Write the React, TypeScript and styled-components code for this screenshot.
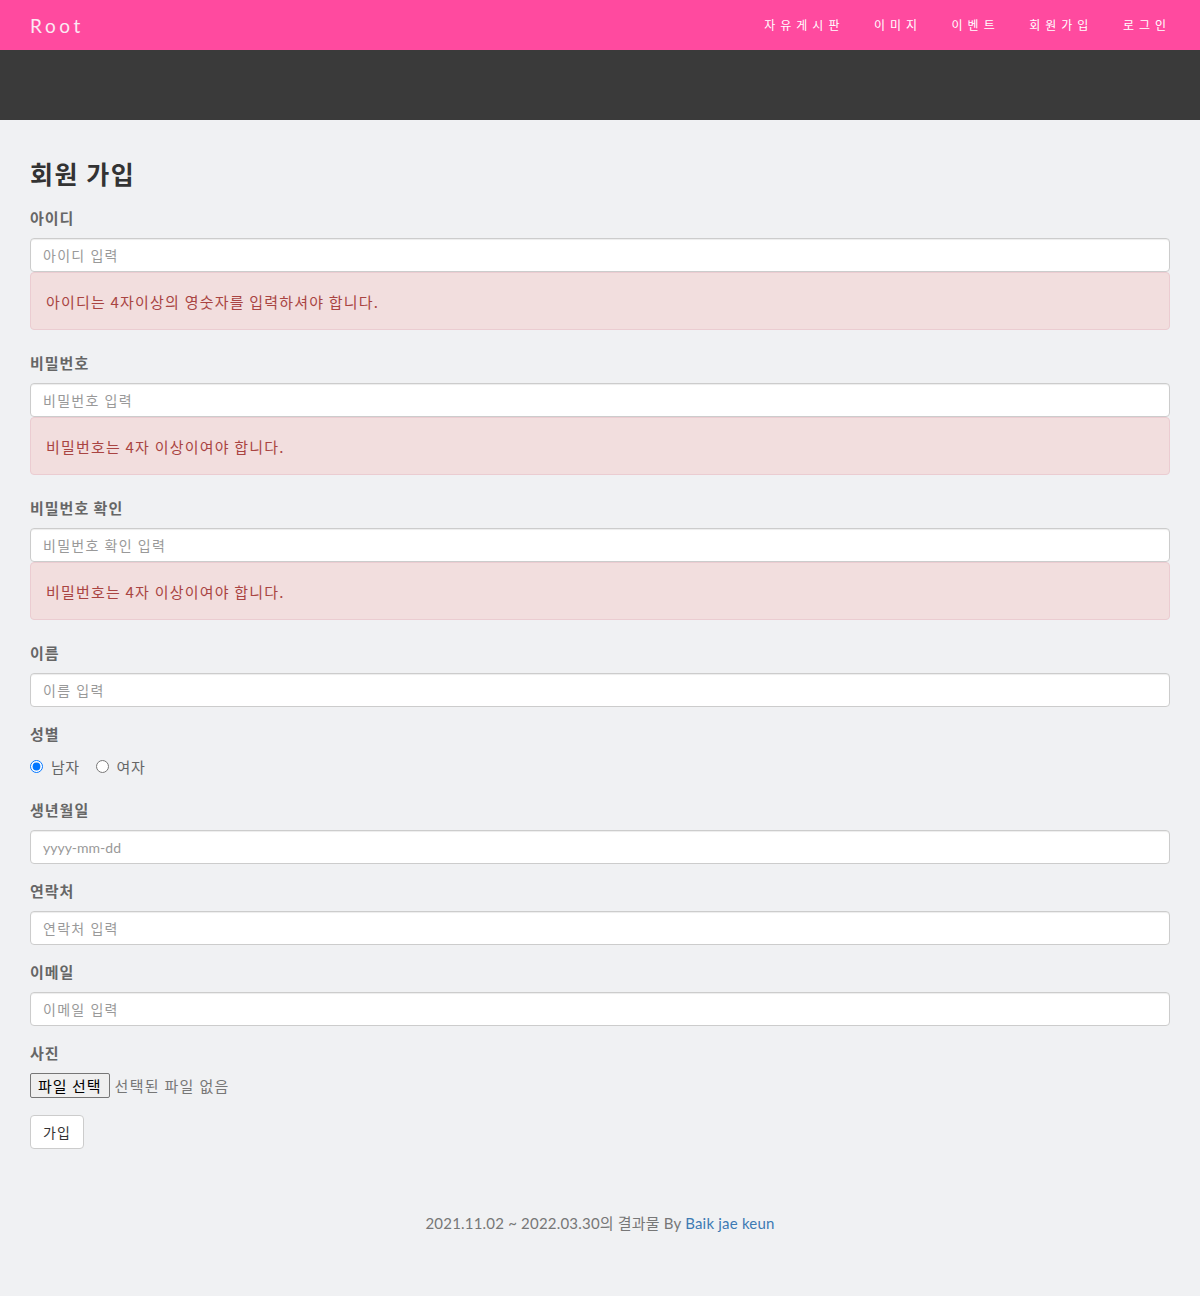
import React from "react";
import styled, { createGlobalStyle } from "styled-components";

const Global = createGlobalStyle`
  html, body { margin: 0; padding: 0; background: #f0f1f3; }
  body { font-family: Lato, "Noto Sans CJK KR", sans-serif; color: #333; }
  * { box-sizing: border-box; }
`;

const NavBar = styled.header`
  height: 50px;
  background: #ff4a9f;
  display: flex;
  align-items: center;
  justify-content: space-between;
  padding: 0 30px;
`;

const Brand = styled.a`
  color: #fbe9f3;
  font-size: 19px;
  letter-spacing: 3.6px;
  text-decoration: none;
  font-family: Lato, "Noto Sans CJK KR", sans-serif;
`;

const NavList = styled.nav`
  display: flex;
  align-items: center;
  gap: 29.5px;
  margin-right: -1px;
  padding-bottom: 2px;
`;

const NavItem = styled.a`
  color: #fff;
  font-size: 12px;
  letter-spacing: 5px;
  text-decoration: none;
  font-family: "Noto Sans CJK KR", sans-serif;
`;

const Band = styled.div`
  height: 70px;
  background: #3a3a3a;
`;

const Main = styled.main`
  padding: 38px 30px 0;
`;

const Title = styled.h1`
  margin: 0 0 20px;
  font-size: 25px;
  line-height: 30px;
  letter-spacing: 1.5px;
  font-weight: 700;
  color: #333;
  font-family: "Noto Sans CJK KR", sans-serif;
`;

const Group = styled.div<{ $mb?: number }>`
  display: flex;
  flex-direction: column;
  margin-bottom: ${(p) => (p.$mb ?? 17)}px;
`;

const Label = styled.label<{ $mb?: number }>`
  font-size: 15px;
  line-height: 20px;
  letter-spacing: 1px;
  font-weight: 700;
  color: #666;
  margin-bottom: ${(p) => (p.$mb ?? 10)}px;
  font-family: "Noto Sans CJK KR", sans-serif;
`;

const Input = styled.input<{ $latin?: boolean }>`
  width: 100%;
  height: 34px;
  padding: 6px 12px;
  font-size: 14px;
  letter-spacing: ${(p) => (p.$latin ? "0" : "1.3px")};
  border: 1px solid #ccc;
  border-radius: 4px;
  background: #fff;
  color: #555;
  font-family: Lato, "Noto Sans CJK KR", sans-serif;
  box-shadow: inset 0 1px 1px rgba(0, 0, 0, 0.075);
  &::placeholder { color: #999; }
`;

const Alert = styled.div`
  margin-top: 0;
  margin-bottom: 6px;
  height: 58px;
  padding: 0 15px;
  display: flex;
  align-items: center;
  background: #f2dede;
  border: 1px solid #ebccd1;
  border-radius: 4px;
  color: #a94442;
  font-size: 15px;
  letter-spacing: 1.2px;
  font-family: "Noto Sans CJK KR", sans-serif;
`;

const RadioRow = styled.div`
  display: flex;
  align-items: center;
  height: 20px;
  font-size: 15px;
  letter-spacing: 0.5px;
  color: #666;
  font-family: "Noto Sans CJK KR", sans-serif;
`;

const RadioLabel = styled.label`
  display: flex;
  align-items: center;
  gap: 8px;
  margin-right: 16px;
  & input { margin: 0; width: 13px; height: 13px; }
`;

const FileRow = styled.div`
  display: flex;
  align-items: center;
  gap: 5px;
  font-family: "Noto Sans CJK KR", sans-serif;
`;

const FileButton = styled.button`
  height: 25px;
  padding: 0 7px;
  font-size: 15px;
  letter-spacing: 1px;
  font-family: "Noto Sans CJK KR", sans-serif;
  background: #efefef;
  border: 1px solid #767676;
  border-radius: 2px;
  color: #000;
`;

const FileText = styled.span`
  font-size: 15px;
  letter-spacing: 1.3px;
  color: #777;
`;

const SubmitButton = styled.button`
  margin-top: 17px;
  width: 54px;
  height: 34px;
  background: #fff;
  border: 1px solid #ccc;
  border-radius: 4px;
  font-size: 14px;
  letter-spacing: 1px;
  color: #333;
  font-family: "Noto Sans CJK KR", sans-serif;
`;

const Footer = styled.footer`
  text-align: center;
  padding: 63px 0 60px;
  font-size: 15px;
  letter-spacing: 0.2px;
  color: #777;
  font-family: Lato, "Noto Sans CJK KR", sans-serif;
  & a { color: #3d7ab3; text-decoration: none; }
`;

const navItems = ["자유게시판", "이미지", "이벤트", "회원가입", "로그인"];

type Field = { label: string; ph: string; type?: string; alert?: string; latin?: boolean };

const fieldsTop: Field[] = [
  { label: "아이디", ph: "아이디 입력", alert: "아이디는 4자이상의 영숫자를 입력하셔야 합니다." },
  { label: "비밀번호", ph: "비밀번호 입력", type: "password", alert: "비밀번호는 4자 이상이여야 합니다." },
  { label: "비밀번호 확인", ph: "비밀번호 확인 입력", type: "password", alert: "비밀번호는 4자 이상이여야 합니다." },
  { label: "이름", ph: "이름 입력" },
];

const fieldsBottom: Field[] = [
  { label: "생년월일", ph: "yyyy-mm-dd", latin: true },
  { label: "연락처", ph: "연락처 입력" },
  { label: "이메일", ph: "이메일 입력" },
];

function FieldGroup({ f }: { f: Field }) {
  return (
    <Group>
      <Label>{f.label}</Label>
      <Input type={f.type ?? "text"} placeholder={f.ph} $latin={f.latin} />
      {f.alert && <Alert>{f.alert}</Alert>}
    </Group>
  );
}

export default function App() {
  return (
    <>
      <Global />
      <NavBar>
        <Brand href="#">Root</Brand>
        <NavList>
          {navItems.map((n) => (
            <NavItem key={n} href="#">{n}</NavItem>
          ))}
        </NavList>
      </NavBar>
      <Band />
      <Main>
        <Title>회원 가입</Title>
        {fieldsTop.map((f) => (
          <FieldGroup key={f.label} f={f} />
        ))}
        <Group $mb={24}>
          <Label $mb={12}>성별</Label>
          <RadioRow>
            <RadioLabel>
              <input type="radio" name="gender" defaultChecked />
              남자
            </RadioLabel>
            <RadioLabel>
              <input type="radio" name="gender" />
              여자
            </RadioLabel>
          </RadioRow>
        </Group>
        {fieldsBottom.map((f) => (
          <FieldGroup key={f.label} f={f} />
        ))}
        <Group $mb={0}>
          <Label>사진</Label>
          <FileRow>
            <FileButton type="button">파일 선택</FileButton>
            <FileText>선택된 파일 없음</FileText>
          </FileRow>
        </Group>
        <SubmitButton type="button">가입</SubmitButton>
      </Main>
      <Footer>
        2021.11.02 ~ 2022.03.30의 결과물 By <a href="#">Baik jae keun</a>
      </Footer>
    </>
  );
}
